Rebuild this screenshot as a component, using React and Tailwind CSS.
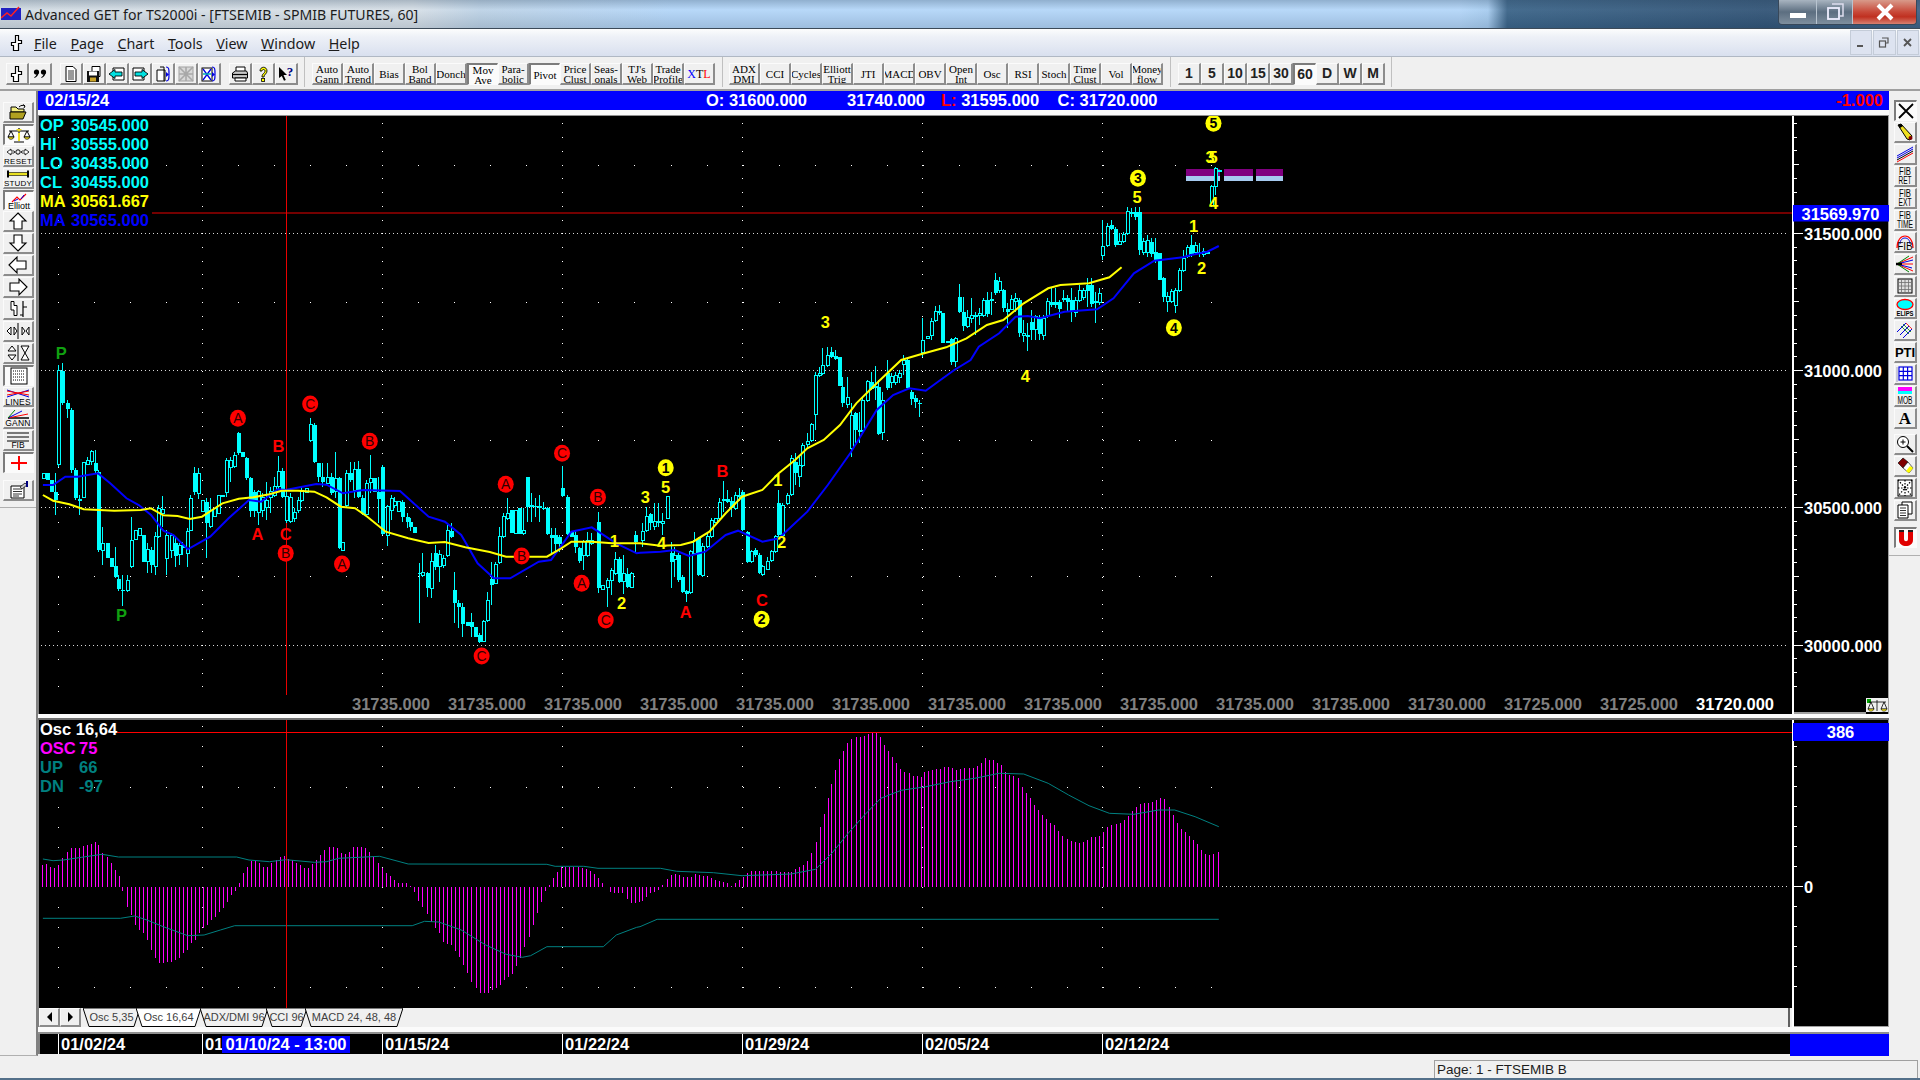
import React from "react";

const RAISED = "bg-[#f0f0f0] border-t border-l border-t-[#fbfbfb] border-l-[#fbfbfb] border-r-2 border-b-2 border-r-[#8c8c8c] border-b-[#8c8c8c]";
const PRESSED = "bg-[#fbfbfb] border-t-2 border-l-2 border-t-[#7c7c7c] border-l-[#7c7c7c] border-r border-b border-r-[#fbfbfb] border-b-[#fbfbfb]";

const Ico = ({ children, s = 18, vb = "0 0 18 18", w }) => (
  <svg width={w || s} height={s} viewBox={vb} className="block shrink-0">{children}</svg>
);
const T = ({ x = 11, y, children, size = 7.5, w = 700, fill = "#000", family = "Liberation Sans", len }) => (
  <text x={x} y={y} textAnchor="middle" fontSize={size} fontWeight={w} fill={fill} fontFamily={family} textLength={len} lengthAdjust={len ? "spacingAndGlyphs" : undefined}>{children}</text>
);

/* ---------- toolbar icons ---------- */
const HandIcon = () => <Ico><path d="M7.5 1.5h3v5h3v3h-3v7h-5v-5h-2v-3h4z" fill="#fff" stroke="#000" strokeWidth="1.2" /></Ico>;
const QuoteIcon = () => <Ico><circle cx="5.5" cy="7" r="2.6" /><path d="M7.6 7c0 3-1.5 5-4 6l-.4-.8c1.5-.8 2.4-2.2 2.4-4z" /><circle cx="12.5" cy="7" r="2.6" /><path d="M14.6 7c0 3-1.5 5-4 6l-.4-.8c1.5-.8 2.4-2.2 2.4-4z" /></Ico>;
const DocIcon = () => <Ico><path d="M4 1.5h7l3 3v12H4z" fill="#fff" stroke="#000" /><path d="M6 6h6M6 8h6M6 10h6M6 12h6M6 14h6" stroke="#000" strokeWidth=".8" /></Ico>;
const SaveIcon = () => <Ico><path d="M7 1.5h8v10H7z" fill="#fff" stroke="#000" /><path d="M2 6h12v11H2z" fill="#111" /><rect x="4" y="6.5" width="8" height="4" fill="#fff" /><rect x="5" y="12.5" width="6" height="4" fill="#c9a227" /></Ico>;
const ArrowDoc = ({ right }) => <Ico>{right ? <path d="M2 3h11v12H2z" fill="#fff" stroke="#000" /> : <path d="M5 3h11v12H5z" fill="#fff" stroke="#000" />}{right ? <path d="M4 7h7V4.500l6 4.500-6 4.500V11H4z" fill="#00e0e0" stroke="#000" strokeWidth=".9" /> : <path d="M14 7H7V4.500L1 9l6 4.500V11h7z" fill="#00e0e0" stroke="#000" strokeWidth=".9" />}</Ico>;
const SplitDoc = () => <Ico><path d="M3 5h8v11H3z" fill="#fff" stroke="#000" /><path d="M6 2h4v14" fill="none" stroke="#000" /><path d="M12 2c3 0 3 2 3 7s0 7-3 7" fill="none" stroke="#0000e0" strokeWidth="1.2" /><path d="M12 7l3 2.5-3 2.5" fill="#0000e0" /></Ico>;
const GrayX = () => <Ico><rect x="2" y="2" width="14" height="14" fill="#d8d8d8" stroke="#a0a0a0" /><path d="M2 2l14 14M16 2L2 16M9 2v14M2 9h14" stroke="#a8a8a8" strokeWidth="1.6" /></Ico>;
const BlueX = () => <Ico><rect x="2" y="3" width="10" height="13" fill="#fff" stroke="#000" /><path d="M3 4l8 11M11 4l-8 11" stroke="#0000e0" strokeWidth="1.3" /><path d="M3 9h8" stroke="#00b0b0" strokeWidth="1.5" /><path d="M12 2c3 0 3 2 3 7s0 7-3 7" fill="none" stroke="#0000e0" strokeWidth="1.2" /><path d="M12 7l3 2.5-3 2.5" fill="#0000e0" /></Ico>;
const PrintIcon = () => <Ico><path d="M5 2h9v5H5z" fill="#fff" stroke="#000" /><path d="M1.5 8l3-2h11l1 2v5h-15z" fill="#c8c8c8" stroke="#000" /><path d="M4 13h11v3H4z" fill="#fff" stroke="#000" /><path d="M2 9.5h14" stroke="#000" strokeWidth="1.2" /></Ico>;
const HelpIcon = () => <Ico><path d="M6 6c0-5 7-5 7 0 0 3-3 3-3 6H8c0-4 3-3.500 3-6 0-2-3-2-3 0z" fill="#ffff00" stroke="#000" strokeWidth=".9" /><rect x="7.600" y="13.500" width="3" height="3" fill="#ffff00" stroke="#000" strokeWidth=".8" /></Ico>;
const PointerHelp = () => <Ico><path d="M2 2l8 8H6.500l2.300 5-1.800.8L4.800 11 2 13z" fill="#000" /><text x="13" y="11" fontSize="13" fontWeight="700" fill="#000080" textAnchor="middle" fontFamily="Liberation Serif">?</text></Ico>;

/* ---------- left strip icons ---------- */
const W = 26;
const Lico = ({ children }) => <svg width={W} height={18} viewBox="0 0 26 18" className="block overflow-visible">{children}</svg>;
const OpenIco = () => <Lico><path d="M6 4h5l2 2h6v3H6z" fill="#f4f080" stroke="#000" /><path d="M5 9h16l-3 7H5z" fill="#b0a020" stroke="#000" /><path d="M14 4c2-2 4-2 6-1M20 3l-2-1.500M20 3l-1 2" fill="none" stroke="#000" /></Lico>;
const ScalesIco = () => <Lico><path d="M13 2v13M8 16h10M3 5h20" stroke="#000" strokeWidth="1.2" /><path d="M5 5l-3 6h6zM21 5l-3 6h6z" fill="none" stroke="#000" /><path d="M2 11c1 3 5 3 6 0zM18 11c1 3 5 3 6 0z" fill="#f0e020" stroke="#000" strokeWidth=".7" /><path d="M10 3l3 3 3-3z" fill="#e8d820" /><rect x="12" y="7" width="2" height="8" fill="#f0e020" /></Lico>;
const ResetIco = () => <Lico><path d="M2 5l4-3v2h3l1 1-1 1H6v2zM24 5l-4-3v2h-3l-1 1 1 1h3v2z" fill="#fff" stroke="#000" strokeWidth=".8" /><circle cx="13" cy="5" r="2.200" fill="none" stroke="#000" /><text x="13" y="16.500" textAnchor="middle" fontSize="8" fontWeight="400" fontFamily="Liberation Sans" letterSpacing=".3">RESET</text></Lico>;
const StudyIco = () => <Lico><rect x="3" y="3.500" width="20" height="3" fill="#e8e020" stroke="#000" strokeWidth=".6" /><path d="M3 1.500v7M23 1.500v7" stroke="#000" strokeWidth="2" /><text x="13" y="17" textAnchor="middle" fontSize="8" fontFamily="Liberation Sans" letterSpacing=".2">STUDY</text></Lico>;
const ElliottIco = () => <Lico><path d="M6 10l5-5 3 3 6-6" fill="none" stroke="#ff0000" strokeWidth="1.1" /><path d="M8 9l4-2" stroke="#0000e0" /><path d="M15 7l3-4" stroke="#0000e0" /><text x="13" y="17" textAnchor="middle" fontSize="9" fontFamily="Liberation Sans">Elliott</text></Lico>;
const ArrowIco = ({ d }) => <Lico><path d={d} fill="#fff" stroke="#000" strokeWidth="1.100" /></Lico>;
const BarsIco = () => <Lico><path d="M6 1.500h3v4H12v10H9V10H6z" fill="#fff" stroke="#000" /><path d="M18 1v6h4M18 7v10M18 15h-3" fill="none" stroke="#000" strokeWidth="1.200" /></Lico>;
const HSplit = () => <Lico><path d="M13 1v16" stroke="#000" /><path d="M6 5L2 9l4 4zM9 5v8l3-4zM17 5v8l3-4zM24 5l-3 4 3 4z" fill="#fff" stroke="#000" /></Lico>;
const VSplit = () => <Lico><path d="M13 1v16" stroke="#000" /><path d="M3 7l4-5 4 5zM3 11l4 5 4-5z" fill="#fff" stroke="#000" /><path d="M16 2h8l-4 7zM16 16h8l-4-7z" fill="#fff" stroke="#000" /></Lico>;
const DotGrid = () => <Lico><rect x="5" y="1" width="16" height="16" fill="#fff" stroke="#000" /><path d="M7 4h12M7 7h12M7 10h12M7 13h12" stroke="#000" strokeWidth="1" strokeDasharray="1 1" /></Lico>;
const LinesIco = () => <Lico><path d="M2 2l22 7M2 9l22-7" stroke="#0000e0" /><path d="M2 3l22 4" stroke="#ff0000" /><path d="M2 7l22-4" stroke="#ff0000" /><text x="13" y="17" textAnchor="middle" fontSize="8.500" fontFamily="Liberation Sans" letterSpacing=".2">LINES</text></Lico>;
const GannIco = () => <Lico><path d="M3 9h21" stroke="#000" strokeWidth="1.500" /><path d="M3 9l20-4" stroke="#ff0000" /><path d="M3 9l14-7" stroke="#0000e0" /><path d="M3 9l7-8" stroke="#008000" /><text x="13" y="17" textAnchor="middle" fontSize="8.500" fontFamily="Liberation Sans" letterSpacing=".2">GANN</text></Lico>;
const FibLeft = () => <Lico><path d="M2 2h22M2 6h22M2 10h22" stroke="#000" strokeWidth="1.200" /><text x="13" y="17" textAnchor="middle" fontSize="8.500" fontFamily="Liberation Sans">FIB</text></Lico>;
const Cross = () => <Lico><path d="M13 2v14M5 9h16" stroke="#ff0000" strokeWidth="2" /></Lico>;
const NotesIco = () => <Lico><path d="M6 5h13v12H6z" fill="#fff" stroke="#000" /><path d="M8 8h9M8 10.500h9M8 13h9M8 15h6" stroke="#000" strokeWidth=".8" /><path d="M15 6l5-4 2 2-5 4z" fill="#c8c8c8" stroke="#000" strokeWidth=".7" /><rect x="21" y="0" width="2" height="6" fill="#000080" /></Lico>;

const up = "M13 1l8 8h-4v8H9V9H5z";
const dn = "M13 17l8-8h-4V1H9v8H5z";
const lf = "M4 9l8-8v4h9v8h-9v4z";
const rt = "M22 9l-8-8v4H5v8h9v4z";

const LEFT_TOOLS = [
  { i: <OpenIco /> },
  { i: <ScalesIco />, p: 1 },
  { i: <ResetIco /> },
  { i: <StudyIco /> },
  { i: <ElliottIco />, p: 1 },
  { i: <ArrowIco d={up} /> },
  { i: <ArrowIco d={dn} /> },
  { i: <ArrowIco d={lf} /> },
  { i: <ArrowIco d={rt} /> },
  { i: <BarsIco /> },
  { i: <HSplit /> },
  { i: <VSplit /> },
  { i: <DotGrid />, p: 1 },
  { i: <LinesIco /> },
  { i: <GannIco /> },
  { i: <FibLeft /> },
  { i: <Cross />, p: 1 },
];

/* ---------- right strip icons ---------- */
const Rico = ({ children }) => <svg width={20} height={18} viewBox="0 0 20 18" className="block overflow-visible">{children}</svg>;
const Two = ({ a, b, la, lb }) => <Rico><T x={10} y={8} size={10} w={400} len={la}>{a}</T><T x={10} y={16.500} size={10} w={400} len={lb}>{b}</T></Rico>;
const RIGHT_1 = [
  { i: <Rico><path d="M3 2l14 14M17 2L3 16" stroke="#000" strokeWidth="1.800" /></Rico>, p: 1 },
  { i: <Rico><path d="M3 2l3-1 11 12-2 4-3-1z" fill="#f0e020" stroke="#000" /><path d="M3 2l3-1 2 2-3 2z" fill="#000" /><circle cx="15.500" cy="15" r="2" fill="#800000" /></Rico> },
  { i: <Rico><path d="M2 11L18 2M2 13L18 4" stroke="#0000e0" /><path d="M2 15L18 6" stroke="#000" /><path d="M2 17L18 8" stroke="#ff0000" /></Rico> },
  { i: <Two a="FIB" b="RET" la={12} lb={13} /> },
  { i: <Two a="FIB" b="EXT" la={12} lb={13} /> },
  { i: <Two a="FIB" b="TIME" la={12} lb={16} /> },
  { i: <Rico><path d="M2 15c0-16 16-16 16 0" fill="none" stroke="#ff0000" strokeWidth="1.200" /><path d="M5 11c0-8 10-8 10 0" fill="none" stroke="#0000e0" /><text x="10" y="17" fontSize="10" textAnchor="middle" fontFamily="Liberation Sans">FIB</text></Rico> },
  { i: <Rico><path d="M2 9l16-7M2 9l16 0M2 9l16 7" stroke="#ff0000" /><path d="M2 9l16-4M2 9l15 4" stroke="#0000e0" /><path d="M2 9l12-8M2 9l12 8" stroke="#008000" /><path d="M1 9h6" stroke="#000" strokeWidth="2.500" /></Rico> },
  { i: <Rico><rect x="3" y="2" width="14" height="14" fill="#e0e0e0" stroke="#000" /><path d="M6.500 2v14M10 2v14M13.500 2v14M3 5.500h14M3 9h14M3 12.500h14" stroke="#707070" strokeWidth=".8" /></Rico> },
  { i: <Rico><ellipse cx="10" cy="5.500" rx="8" ry="5" fill="#00ffff" stroke="#ff0000" strokeWidth="1.300" /><text x="10" y="17" fontSize="8" fontWeight="700" textAnchor="middle" fontFamily="Liberation Sans" textLength="17" lengthAdjust="spacingAndGlyphs">ELIPS</text></Rico> },
  { i: <Rico><path d="M2 11l9-9M5 14l9-9M8 17l9-9" stroke="#0000e0" /><path d="M8 3l8 8M6 5l8 8" stroke="#008000" strokeWidth=".8" /><path d="M11 2l6 6" stroke="#ff0000" strokeWidth=".8" /></Rico> },
  { i: <Rico><T x={10} y={14} size={13} w={700}>PTI</T></Rico> },
  { i: <Rico><path d="M2 2v15" stroke="#a0a0c0" /><rect x="4" y="2" width="13" height="13" fill="#fff" stroke="#0000e0" strokeWidth="1.200" /><path d="M8.300 2v13M12.600 2v13M4 6.300h13M4 10.600h13" stroke="#0000e0" strokeWidth="1.200" /></Rico> },
  { i: <Rico><rect x="3" y="0" width="14" height="4" fill="#ff00ff" /><rect x="3" y="4" width="14" height="3" fill="#00ffff" /><text x="10" y="17" fontSize="10" textAnchor="middle" fontFamily="Liberation Sans" textLength="15" lengthAdjust="spacingAndGlyphs">MOB</text></Rico> },
  { i: <Rico><text x="10" y="15" fontSize="17" fontWeight="700" textAnchor="middle" fontFamily="Liberation Serif">A</text></Rico> },
];
const RIGHT_2 = [
  { i: <Rico><circle cx="8" cy="7" r="5.500" fill="#fff" stroke="#000" /><path d="M5.500 7h5M8 4.500v5" stroke="#000" /><path d="M12 11l6 6" stroke="#000" strokeWidth="2" /></Rico> },
  { i: <Rico><path d="M3 6l5-5 5 4-5 6z" fill="#800000" stroke="#000" strokeWidth=".6" /><path d="M8 11l5-6 5 6-4 5z" fill="#fff" stroke="#000" strokeWidth=".6" /><path d="M11 14l4-5 3 2-4 5z" fill="#ffff00" /></Rico> },
  { i: <Rico><rect x="3" y="1" width="14" height="16" fill="#fff" stroke="#000" /><path d="M3 1l14 16M17 1L3 17M10 1v16M3 9h14" stroke="#000" strokeWidth="1.200" strokeDasharray="1.500 1.500" /></Rico> },
  { i: <Rico><path d="M7 1h10v12H7z" fill="#fff" stroke="#000" /><path d="M3 4h10v13H3z" fill="#fff" stroke="#000" /><path d="M5 7h6M5 9.500h6M5 12h6M5 14.500h6" stroke="#000" strokeWidth=".8" /></Rico> },
];

/* ---------- top toolbar data ---------- */
const Sv = ({ children, c = "" }) => <span className={"whitespace-pre-line text-center leading-[10px] text-[11px] text-black [font-family:Liberation_Serif,serif] " + c}>{children}</span>;
const IND_1 = ["Auto\nGann", "Auto\nTrend", "Bias", "Bol\nBand", "Donch", "Mov\nAve", "Para-\nbolic", "Pivot", "Price\nClust", "Seas-\nonals", "TJ's\nWeb", "Trade\nProfile"];
const IND_2 = ["ADX\nDMI", "CCI", "Cycles", "Elliott\nTrig", "JTI", "MACD", "OBV", "Open\nInt", "Osc", "RSI", "Stoch", "Time\nClust", "Vol", "Money\nflow"];
const PERIODS = ["1", "5", "10", "15", "30", "60", "D", "W", "M"];

const Tb = ({ p, children, wide }) => (
  <div className={"flex items-center justify-center overflow-hidden h-[22px] " + (wide ? "w-[31px] " : "w-[23px] ") + (p ? PRESSED : RAISED)}>{children}</div>
);

/* ---------- chart data: [x, bodyTop, bodyBottom, filled, wickTop, wickBottom] ---------- */
const C4 = [[105,640,655,0],[114,640,660,1],[124,660,695,1],[134,695,720,1,640,765],[143,332,612,0,315,620],[153,332,430,1,310,435],[163,428,447,1,420,475],[173,450,630,1,445,640],[183,630,715,1,625,720],[193,718,722,1,705,765],[203,607,712,0],[213,600,612,0,590,615],[222,575,605,0,570,615],[232,610,632,1,570,640],[241,635,870,1,630,875],[251,850,872,0,800,915],[261,850,895,1],[271,895,922,1],[281,917,952,1,860,955],[290,958,988,1,945,992],[300,990,994,1,945,1038],[310,962,992,0,945,995],[320,840,920,0,770,925],[330,812,838,0],[340,806,825,0],[350,825,905,1],[360,868,905,0,850,940],[370,870,915,1,860,940],[380,830,920,0,815,945],[388,745,830,0,735,835],[398,747,760,0,708,800],[407,826,895,0,810,945],[418,826,870,0,820,895],[428,850,887,1,830,920],[438,855,882,0,850,915],[447,858,862,0,845,885],[457,815,880,0,805,922],[466,715,810,0,705,812],[476,640,697,1,622,705],[486,640,700,0,625,718],[495,722,755,0],[505,726,790,1,715,893],[515,752,800,0,715,805],[525,746,770,0],[535,705,760,0],[545,705,708,0],[553,600,697,0,595,710],[563,602,622,0,590,665],[573,585,620,0,575,625],[583,520,578,1,515,585],[593,575,590,1],[603,595,655,1,590,660],[613,655,752,1,650,770],[623,695,752,1,690,770],[632,695,757,0,690,795],[642,712,752,0,700,770],[652,720,742,0,665,780],[662,695,712,0,680,760],[672,680,705,0,650,710],[682,635,680,0,588,690],[692,632,710,1,625,715],[700,710,782,0,690,790],[710,712,785,0,700,790],[720,757,775,0,745,785],[730,720,752,0,710,760],[738,692,720,0,682,725],[750,685,697,0],[760,493,542,0,475,545],[770,495,607,1,490,610],[780,610,650,1,608,665],[790,650,667,1,610,680],[800,652,670,0,610,672],[810,652,700,1,640,705],[820,655,695,0,575,715],[830,655,865,1,650,868],[838,848,870,0],[848,640,735,0,630,745],[858,640,660,1,605,665],[868,628,690,0,605,715],[878,628,710,1,602,715],[887,715,762,1,705,765],[897,670,762,0,660,765],[907,655,667,0,585,700],[917,655,697,1],[927,695,717,1,650,790],[937,620,822,1,615,826],[947,740,825,0,735,857],[957,715,752,0,705,780],[966,725,737,0,710,745],[976,725,755,0],[986,725,770,1,720,785],[996,770,785,1,760,805],[1005,785,802,1,775,812],[1015,800,818,1],[1027,938,942,1,910,1090],[1035,938,946,0,880,950],[1045,940,985,1,935,1010],[1055,905,985,0,880,1015],[1065,880,920,1,855,930],[1075,882,920,0,870,965],[1085,895,917,0,885,925],[1095,812,885,0,795,892],[1105,812,832,1,790,835],[1113,990,1028,1,935,1090],[1123,1028,1042,1,1020,1105],[1133,1042,1092,1,1030,1130],[1143,1085,1097,1],[1155,1085,1102,1,1060,1130],[1163,1102,1130,1],[1173,1125,1147,1,1120,1150],[1183,1085,1143,0,1080,1146],[1192,1020,1082,0,995,1085],[1202,958,975,1,905,1035],[1212,912,970,0,905,972],[1222,830,907,0,800,912],[1232,770,830,0,760,835],[1241,760,775,0,715,780],[1251,750,820,1],[1261,750,820,0],[1271,745,822,1],[1281,810,820,0,745,825],[1290,652,740,1,650,785],[1300,735,742,1,700,785],[1310,738,742,1,715,770],[1320,738,745,1,705,785],[1330,745,748,1,725,750],[1339,745,822,1,740,825],[1349,825,835,1,805,880],[1359,825,852,1,805,880],[1369,830,852,1,825,875],[1378,683,708,1,618,712],[1388,710,822,1,705,825],[1398,815,832,1],[1408,825,862,1,810,880],[1418,865,902,1,860,910],[1428,845,887,0,840,930],[1438,840,887,0,815,890],[1447,842,850,0,818,855],[1466,785,985,1,755,1000],[1476,975,987,0],[1486,960,982,0,955,1040],[1496,930,962,0,925,1005],[1506,897,940,0,875,945],[1516,897,965,1,890,970],[1526,940,965,0,885,1002],[1536,942,982,1,925,985],[1546,940,982,0,935,985],[1556,825,847,1,812,880]];
const C5 = [[5,815,842,0,790,862],[15,770,812,0,740,815],[25,763,790,1,760,810],[35,785,800,0,730,810],[45,785,788,0,730,800],[55,785,790,0,760,825],[65,710,775,0],[75,880,905,1,845,985],[83,885,897,0,860,950],[93,885,960,1,880,965],[103,950,997,1,945,1000],[113,993,1002,1,990,1025],[123,875,997,0,870,1002],[133,840,880,0,815,885],[143,835,945,1,830,948],[153,860,945,0,850,950],[163,830,860,0,815,865],[173,780,830,0,775,835],[183,775,787,0],[193,728,775,0,715,780],[203,717,720,0,662,755],[213,717,727,1,690,730],[223,722,745,1,710,770],[233,705,745,0,695,750],[243,705,708,0,685,722],[251,695,810,1,690,812],[261,815,905,1,812,908],[271,875,905,0,870,908],[281,870,885,1,865,890],[291,885,938,1,880,942],[300,920,942,0,915,948],[310,905,927,0,890,930],[320,875,902,0,870,905],[330,830,875,0,825,880],[339,730,825,1,690,835],[349,735,825,0,730,828],[359,705,730,0,700,735],[369,595,702,0,585,708],[379,605,640,1,580,675],[389,615,650,0,590,680],[398,555,617,0,550,620],[408,545,552,0,520,565],[418,492,540,0,490,545],[428,345,463,0,335,510],[438,340,347,0,320,350],[447,315,340,0,265,345],[457,285,317,0,262,320],[467,275,292,1,262,295],[477,287,297,1,270,300],[487,290,378,1],[496,380,430,1,350,440],[506,412,432,0,350,445],[516,465,565,0,430,590],[526,460,510,1,455,550],[536,510,513,0,455,550],[545,420,512,0,415,515],[555,365,420,0,360,425],[565,367,387,1,335,390],[575,380,383,0,318,420],[584,380,522,1,360,525],[594,420,517,0,395,540],[604,340,385,1,300,390],[614,350,367,0,340,385],[624,345,367,0,335,375],[634,340,352,0,330,370],[644,300,312,0,285,345],[653,300,385,1,295,390],[663,395,417,1,390,435],[673,415,427,1,405,445],[683,428,431,1,420,470],[692,242,278,0,175,290],[702,230,236,0],[712,185,227,0,175,240],[722,155,182,0,138,185],[732,155,158,0,135,165],[741,158,250,1],[751,245,248,0],[761,238,305,1,235,315],[771,235,305,0,230,320],[781,112,155,1,72,160],[791,155,198,1,110,212],[800,172,200,0,150,205],[810,165,175,0,115,190],[820,165,168,0,155,225],[830,160,165,0,145,195],[840,120,165,0,115,170],[850,120,162,1,95,170],[860,118,122,0,95,165],[869,60,100,1,40,105],[879,65,92,0,50,100],[889,90,145,1,88,155],[899,147,155,1,130,205],[909,118,147,0,105,150],[919,115,125,0,100,155],[928,120,220,1,115,230],[938,220,225,0,180,245],[948,225,228,0,190,272],[958,185,210,1,150,240],[968,170,207,0,165,240],[977,170,222,1,165,240],[987,175,225,0,165,240],[997,125,167,0,115,175],[1007,125,135,1,80,140],[1017,125,135,1,85,145],[1027,125,147,1,120,175],[1037,115,118,0,90,125],[1047,115,125,1,105,155],[1056,120,157,1,85,185],[1066,120,157,0,110,170],[1076,90,122,0,75,125],[1086,90,112,0,85,120],[1096,75,92,1,55,140],[1105,75,132,1,55,140],[1115,125,128,0,95,188],[1125,100,127,0,85,135],[1272,-20,60,1],[1281,55,110,1,50,125],[1291,110,125,0,95,155],[1300,95,125,0,88,130],[1310,90,135,0,85,160],[1320,30,92,0,25,95],[1330,-5,30,0,-30,35]];
const C2 = [[1133,740,767,0,660,780],[1143,680,737,0,670,740],[1153,675,687,1,660,690],[1163,688,735,1,680,740],[1173,725,732,0,700,735],[1183,703,725,0,695,730],[1193,635,700,0,622,705],[1203,635,642,1,625,650],[1213,637,652,1,622,660],[1222,635,750,1,620,765],[1232,725,757,0,715,765],[1242,720,757,0,705,770],[1252,725,762,1,715,770],[1262,755,780,1,715,790],[1340,742,770,0,735,775],[1349,735,762,1,705,770],[1359,735,757,0,725,765],[1369,755,762,1,730,770],[1379,755,762,0,745,770],[1389,757,762,1],[1398,560,617,0,555,622],[1408,505,560,0,500,585],[1418,510,516,1]];

const z4 = ([x, y]) => [x / 2.45, 260 + y / 3];
const z5 = ([x, y]) => [640 + x / 2.45, 260 + y / 3];
const z2 = ([x, y]) => [640 + x / 2.45, y / 3];
const mapC = (arr, bx, by) => arr.map(([x, t, b, f, wt, wb]) => ({ x: Math.round(bx + x / 2.45), t: by + t / 3, b: by + b / 3, f, wt: by + (wt ?? t) / 3, wb: by + (wb ?? b) / 3 }));
const CANDLES = [...mapC(C4, 0, 260), ...mapC(C5, 640, 260), ...mapC(C2, 640, 0)];

const pts = (a) => a.map(([x, y]) => x.toFixed(1) + "," + y.toFixed(1)).join(" ");
const pairs = (f, list) => list.map(f);
const YELLOW = pts([...pairs(z4, [[105,705],[130,722],[170,733],[205,748],[280,752],[345,750],[370,745],[400,766],[435,768],[465,777],[495,770],[520,750],[545,730],[585,716],[620,712],[660,703],[690,692],[730,692],[770,695],[800,712],[835,740],[870,745],[900,770],[945,815],[1000,835],[1050,849],[1090,846],[1140,862],[1200,876],[1240,890],[1340,890],[1375,865],[1400,845],[1450,845],[1500,850],[1568,850]]), ...pairs(z5, [[50,857],[100,855],[130,845],[170,815],[210,760],[250,710],[300,690],[340,640],[380,600],[410,565],[450,540],[490,495],[530,430],[580,370],[640,300],[690,282],[750,262],[800,235],[850,195],[890,180],[940,130],[1000,85],[1030,75],[1100,70],[1150,52],[1180,22]])]);
const BLUE = pts([...pairs(z4, [[105,675],[130,675],[160,650],[190,650],[240,640],[270,670],[310,715],[340,735],[370,765],[400,812],[425,825],[460,868],[515,830],[560,775],[610,720],[640,725],[680,688],[700,690],[750,678],[775,672],[800,674],[840,700],[890,690],[980,693],[1050,770],[1090,785],[1130,825],[1170,910],[1210,955],[1250,955],[1320,905],[1350,900],[1400,815],[1450,802],[1510,850],[1560,880]]), ...pairs(z5, [[0,878],[50,875],[85,870],[120,888],[160,875],[210,825],[240,812],[300,845],[340,835],[410,755],[460,675],[515,580],[580,450],[620,405],[660,385],[700,392],[730,365],[770,330],[810,300],[830,260],[880,220],[920,170],[950,168],[980,175],[1040,155],[1120,148],[1160,115],[1210,40],[1260,2]]), ...pairs(z2, [[1330,772],[1350,765],[1390,755],[1418,738]])]);

const LABELS = [
  [z4([150,280]),"P","#10a010"],[z4([298,1065]),"P","#10a010"],
  [z4([583,475]),"A","r",1],[z4([682,557]),"B","#ff0000"],[z4([631,823]),"A","#ff0000"],[z4([700,822]),"C","#ff0000"],[z4([700,880]),"B","r",1],[z4([760,432]),"C","r",1],[z4([906,544]),"B","r",1],[z4([838,912]),"A","r",1],[z4([1377,580]),"C","r",1],[z4([1239,673]),"A","r",1],[z4([1465,712]),"B","r",1],[z4([1278,888]),"B","r",1],[z4([1425,970]),"A","r",1],[z4([1484,1080]),"C","r",1],[z4([1180,1188]),"C","r",1],
  [z4([1505,843]),"1","#ffff00"],[z4([1523,1030]),"2","#ffff00"],
  [z5([63,623]),"1","y",1],[z5([63,680]),"5","#ffff00"],[z5([13,712]),"3","#ffff00"],[z5([53,850]),"4","#ffff00"],[z5([202,633]),"B","#ff0000"],[z5([338,660]),"1","#ffff00"],[z5([347,845]),"2","#ffff00"],[z5([112,1055]),"A","#ff0000"],[z5([299,1020]),"C","#ff0000"],[z5([298,1078]),"2","y",1],[z5([454,187]),"3","#ffff00"],[z5([944,347]),"4","#ffff00"],[z5([1308,203]),"4","y",1],[z5([1376,25]),"2","#ffff00"],
  [z2([1220,535]),"3","y",1],[z2([1218,592]),"5","#ffff00"],[z2([1356,677]),"1","#ffff00"],[z2([1405,370]),"5","y",1],[z2([1397,470]),"3","#ffff00"],[z2([1404,470]),"5","#ffff00"],[z2([1405,608]),"4","#ffff00"],
];

/* grid */
const TICK = 13.73;
const mainYs = []; for (let k = -8; k <= 34; k++) { const y = 233.3 + k * TICK; if (y > 118 && y < 700) mainYs.push({ y, k }); }
const VX = [202, 382, 562, 742, 922, 1102];
const HX = []; for (let x = 58; x <= 1211; x += 36.03) HX.push(Math.round(x));
const mainDots = [];
mainYs.forEach(({ y, k }) => { VX.forEach((x) => mainDots.push([x, y])); if (k % 2 === 1 || k % 2 === -1) mainDots.push([58, y]); });
[165, 302, 439.5, 576].forEach((y) => HX.forEach((x) => mainDots.push([x, y])));

const OSC0 = 886.7;
const oscYs = []; for (let k = -8; k <= 5; k++) oscYs.push(OSC0 + k * 20.05);
const oscDots = [];
oscYs.forEach((y) => { VX.forEach((x) => oscDots.push([x, y])); if (y > 790 && Math.abs(y - OSC0) > 5) oscDots.push([58, y]); });
[787, 987].forEach((y) => HX.forEach((x) => oscDots.push([x, y])));

/* oscillator bars: flat list of x,tip in zoom units */
const O6 = [103,465,113,462,123,470,133,475,143,465,153,445,163,425,173,415,183,415,193,413,203,408,213,405,222,403,232,396,241,405,251,430,261,440,271,460,281,480,291,498,300,543,310,590,320,615,330,645,340,660,350,670,360,690,370,720,380,745,389,758,399,758,409,756,419,755,428,750,438,745,448,730,458,720,467,700,477,690,487,670,497,655,507,645,517,630,526,620,536,605,546,595,556,575,566,555,575,542,585,518,595,490,605,470,615,453,625,453,635,458,645,470,655,472,665,460,675,450,685,440,695,438,705,447,715,450,725,458,735,465,745,475,755,475,765,462,775,450,785,435,795,420,805,412,815,410,825,415,835,430,845,432,855,425,865,412,875,410,885,412,895,415,905,425,915,440,925,458,935,475,945,488,955,498,965,510,975,520,985,520,995,520,1005,528,1015,545,1025,573,1035,590,1045,612,1055,635,1065,655,1075,670,1085,695,1095,703,1105,705,1115,722,1125,742,1135,765,1145,790,1155,815,1165,835,1175,850,1185,850,1195,848,1205,840,1215,835,1225,825,1235,810,1245,800,1255,792,1265,768,1275,745,1285,710,1295,680,1305,645,1315,610,1325,575,1335,542,1345,525,1355,505,1365,485,1375,472,1385,470,1395,470,1405,470,1415,472,1425,475,1435,478,1445,482,1455,492,1465,505,1475,520,1485,530,1495,545,1505,548,1515,550,1525,548,1535,568,1545,580,1555,578,1565,575];
const O7 = [5,572,15,560,25,550,35,545,45,540,55,525,65,508,75,495,85,492,95,495,105,502,115,502,125,502,135,492,145,495,155,498,165,498,173,505,183,510,193,514,203,516,213,520,222,528,232,520,242,510,252,500,262,490,272,483,282,482,292,484,302,484,312,482,322,484,332,484,342,487,352,487,362,487,370,485,380,478,390,470,400,465,410,452,420,430,430,395,440,352,450,312,460,265,468,222,478,180,488,148,498,122,508,98,518,88,528,82,538,80,548,78,558,72,568,68,578,68,588,82,598,105,608,122,618,140,628,158,638,178,648,185,658,190,668,198,678,198,688,202,695,185,705,182,715,180,725,178,735,178,745,172,755,170,765,175,775,180,785,178,795,175,805,175,815,175,825,168,835,158,845,145,855,150,865,150,875,158,885,165,895,185,905,195,915,197,925,205,935,232,945,250,955,265,965,285,975,300,985,315,995,328,1005,340,1015,345,1025,362,1035,378,1045,388,1055,392,1065,395,1075,398,1085,396,1095,390,1105,380,1115,380,1125,378,1135,365,1145,350,1155,345,1165,342,1175,340,1185,330,1195,318,1205,303,1215,290,1225,282,1235,280,1245,278,1255,275,1265,270,1275,265,1285,268,1295,290,1305,315,1315,340,1325,357,1335,365,1345,378,1355,390,1365,402,1375,420,1385,432,1395,435,1405,432,1415,425,1418,410];
const BARS = [];
for (let i = 0; i < O6.length; i += 2) BARS.push([Math.round(O6[i] / 2.45), 710 + O6[i + 1] / 3]);
for (let i = 0; i < O7.length - 2; i += 2) BARS.push([Math.round(640 + O7[i] / 2.45), 710 + O7[i + 1] / 3]);
const zo6 = ([x, y]) => [x / 2.45, 710 + y / 3];
const zo7 = ([x, y]) => [640 + x / 2.45, 710 + y / 3];
const TEAL_U = pts([...[[105,447],[130,452],[155,450],[200,442],[250,433],[290,441],[580,441],[610,450],[660,455],[700,449],[770,457],[800,455],[830,445],[930,439],[1000,462],[1340,463],[1360,469],[1430,469],[1465,475],[1568,475]].map(zo6), ...[[50,475],[90,484],[180,488],[250,497],[370,492],[430,478],[470,430],[510,370],[550,315],[590,265],[640,241],[700,230],[760,215],[820,205],[880,190],[940,192],[1000,220],[1050,255],[1100,287],[1150,310],[1210,313],[1270,300],[1310,300],[1360,320],[1418,350]].map(zo7)]);
const TEAL_L = pts([...[[105,625],[295,625],[330,618],[360,630],[400,650],[460,677],[500,675],[540,660],[575,647],[1010,647],[1040,634],[1075,636],[1130,660],[1190,705],[1240,733],[1280,742],[1300,737],[1340,710],[1478,710],[1510,675],[1560,652]].map(zo6), ...[[0,650],[42,628],[1418,628]].map(zo7)]);

const Dots = ({ list }) => <g fill="#fff" shapeRendering="crispEdges">{list.map(([x, y], i) => <rect key={i} x={x} y={Math.round(y)} width="1" height="1" />)}</g>;

const MainChart = () => (
  <svg width="1753" height="598" viewBox="39 116 1753 598" className="block">
    <Dots list={mainDots} />
    <g stroke="#d8d8d8" strokeDasharray="1 3" shapeRendering="crispEdges">
      {[233, 370, 507, 645].map((y) => <line key={y} x1="41" x2="1788" y1={y} y2={y} />)}
    </g>
    <line x1="286.500" x2="286.500" y1="116" y2="695" stroke="#e80000" />
    <line x1="152" x2="1792" y1="213" y2="213" stroke="#e80000" />
    <g shapeRendering="crispEdges">
      {[[1186, 34], [1224, 29], [1256, 27]].map(([x, w]) => (
        <g key={x}><rect x={x} y="169" width={w} height="7" fill="#800080" /><rect x={x} y="176" width={w} height="5" fill="#a6caf0" /></g>
      ))}
    </g>
    <g shapeRendering="crispEdges">
      {CANDLES.map((c, i) => (
        <g key={i}>
          <line x1={c.x + 0.5} x2={c.x + 0.5} y1={c.wt} y2={c.wb} stroke="#00ffff" />
          {c.f ? <rect x={c.x - 1.5} y={c.t} width="4" height={Math.max(c.b - c.t, 1)} fill="#00ffff" /> : <rect x={c.x - 1} y={c.t} width="3" height={Math.max(c.b - c.t, 1)} fill="#000" stroke="#00ffff" />}
        </g>
      ))}
    </g>
    <polyline points={BLUE} fill="none" stroke="#0000ff" strokeWidth="2" />
    <polyline points={YELLOW} fill="none" stroke="#ffff00" strokeWidth="2" />
    <g fontFamily="Liberation Sans" fontWeight="700" textAnchor="middle" dominantBaseline="central">
      {LABELS.map(([[x, y], t, col, circ], i) => circ ? (
        <g key={i}>
          <ellipse cx={x} cy={y} rx="8" ry="8.500" fill={col === "r" ? "#ff0000" : "#ffff00"} />
          <text x={x} y={y} fontSize="14" fill={col === "r" ? "#300000" : "#000"} fontWeight={col === "r" ? 400 : 700}>{t}</text>
        </g>
      ) : <text key={i} x={x} y={y} fontSize="16.500" fill={col}>{t}</text>)}
    </g>
  </svg>
);

const OscChart = () => (
  <svg width="1753" height="288" viewBox="39 720 1753 288" className="block">
    <Dots list={oscDots} />
    <line x1="1222" x2="1788" y1="886.500" y2="886.500" stroke="#d8d8d8" strokeDasharray="1 3" shapeRendering="crispEdges" />
    <g stroke="#ff00ff" strokeWidth="1" shapeRendering="crispEdges">
      {BARS.map(([x, y], i) => <line key={i} x1={x + 0.5} x2={x + 0.5} y1={y} y2={OSC0} />)}
    </g>
    <polyline points={TEAL_U} fill="none" stroke="#008080" strokeWidth="1" />
    <polyline points={TEAL_L} fill="none" stroke="#008080" strokeWidth="1" />
    <line x1="286.500" x2="286.500" y1="720" y2="1008" stroke="#e80000" />
    <line x1="116" x2="1792" y1="732.500" y2="732.500" stroke="#ff0000" />
  </svg>
);

const PriceAxis = () => (
  <svg width="97" height="598" viewBox="1792 116 97 598" className="block">
    <rect x="1792" y="116" width="2" height="598" fill="#fff" />
    <rect x="1888" y="116" width="1" height="598" fill="#a0a0a0" />
    <rect x="1794" y="712" width="72" height="2" fill="#a0a0a0" />
    <g stroke="#fff" shapeRendering="crispEdges">
      {mainYs.map(({ y, k }) => {
        const mk = ((k % 10) + 10) % 10;
        return <line key={k} x1="1794" x2={mk === 0 ? 1803 : mk === 5 ? 1799 : 1797} y1={y} y2={y} />;
      })}
    </g>
    <g fill="#fff" fontFamily="Liberation Sans" fontWeight="700" fontSize="16.500" dominantBaseline="central">
      {[[31500, 234], [31000, 371], [30500, 508], [30000, 646]].map(([v, y]) => <text key={v} x="1804" y={y}>{v}.000</text>)}
    </g>
    <rect x="1793" y="205" width="96" height="16.500" fill="#0000ff" />
    <text x="1840.500" y="213.500" fill="#fff" fontFamily="Liberation Sans" fontWeight="700" fontSize="16.500" textAnchor="middle" dominantBaseline="central">31569.970</text>
    <g transform="translate(1866 698)">
      <rect width="22" height="14" fill="#f0f0f0" />
      <rect x="1" y="1" width="4" height="4" fill="#00a000" />
      <path d="M3 4h17M11 2v11M5 4l-3 7h6zM18 4l-3 7h6z" stroke="#000" strokeWidth=".8" fill="none" />
      <path d="M2 11c1 3 5 3 6 0zM15 11c1 3 5 3 6 0z" fill="#f0e020" stroke="#000" strokeWidth=".5" />
    </g>
  </svg>
);

const OscAxis = () => (
  <svg width="97" height="307" viewBox="1792 720 97 307" className="block">
    <rect x="1792" y="720" width="2" height="307" fill="#fff" />
    <rect x="1888" y="720" width="1" height="307" fill="#a0a0a0" />
    <rect x="1794" y="1026" width="94" height="1" fill="#a0a0a0" />
    <g stroke="#fff" shapeRendering="crispEdges">
      {oscYs.map((y, i) => <line key={i} x1="1794" x2={Math.abs(y - OSC0) < 1 ? 1803 : 1797} y1={y} y2={y} />)}
    </g>
    <text x="1804" y="887" fill="#fff" fontFamily="Liberation Sans" fontWeight="700" fontSize="16.500" dominantBaseline="central">0</text>
    <rect x="1793" y="723" width="96" height="18" fill="#0000ff" />
    <text x="1840.500" y="732" fill="#fff" fontFamily="Liberation Sans" fontWeight="700" fontSize="16.500" textAnchor="middle" dominantBaseline="central">386</text>
  </svg>
);

const Tab = ({ w, active, children, c }) => (
  <div className={"relative h-[19px] flex items-center justify-center " + c + (active ? " z-10" : "")}>
    <svg width={w} height="19" viewBox={`0 0 ${w} 19`} className="absolute left-0 top-0">
      <polygon points={`0,0 ${w},0 ${w - 6},18.500 6,18.500`} fill={active ? "#fff" : "#f0f0f0"} stroke="#000" strokeWidth="1" />
    </svg>
    <span className="relative text-[11px] text-[#404040] whitespace-nowrap">{children}</span>
  </div>
);

const INFO = [
  ["OP", "30545.000", "text-[#00ffff]"],
  ["HI", "30555.000", "text-[#00ffff]"],
  ["LO", "30435.000", "text-[#00ffff]"],
  ["CL", "30455.000", "text-[#00ffff]"],
  ["MA", "30561.667", "text-[#ffff00]"],
  ["MA", "30565.000", "text-[#0000ff]"],
];
const OSCINFO = [
  ["OSC", "75", "text-[#ff00ff]"],
  ["UP", "66", "text-[#008080]"],
  ["DN", "-97", "text-[#008080]"],
];
const BOTTOM_PRICES = ["31735.000", "31735.000", "31735.000", "31735.000", "31735.000", "31735.000", "31735.000", "31735.000", "31735.000", "31735.000", "31735.000", "31730.000", "31725.000", "31725.000", "31720.000"];
const DATES = [["w-[144px]", "01/02/24"], ["w-[180px]", "01"], ["w-[180px]", "01/15/24"], ["w-[180px]", "01/22/24"], ["w-[180px]", "01/29/24"], ["w-[180px]", "02/05/24"], ["w-[180px]", "02/12/24"]];

export default function App() {
  return (
    <div className="w-[1920px] h-[1080px] flex flex-col overflow-hidden bg-[#f0f0f0] [font-family:Liberation_Sans,sans-serif]">
      {/* Title bar */}
      <div className="h-[29px] shrink-0 flex items-center border-b border-[#3c4a58] bg-[linear-gradient(180deg,rgba(90,110,130,0.35),rgba(255,255,255,0.12)_35%,rgba(90,105,120,0.2)),linear-gradient(90deg,#cfd9e1_0%,#d4dde5_21.500%,#b8cfe4_25%,#aed3f8_35%,#aed3f8_76%,#a0c8ee_77.500%,#2c587f_78.500%,#22476c_92%,#30567c_100%)]">
        <svg width="20" height="20" viewBox="0 0 20 20" className="ml-[1px] shrink-0">
          <path d="M0 4h20v12H0z" fill="#2020c0" /><path d="M0 14l6-5 4 3 8-9" fill="none" stroke="#ff2020" strokeWidth="1.500" />
        </svg>
        <span className="ml-[4px] mt-[2px] text-[14.100px] text-[#1c1c1c] [font-family:Noto_Sans,sans-serif] whitespace-nowrap">Advanced GET for TS2000i - [FTSEMIB - SPMIB FUTURES, 60]</span>
        <div className="ml-auto mr-[3px] self-start flex h-[25px] border border-t-0 border-[#38485a] rounded-b-[4px] overflow-hidden">
          <div className="w-[38px] flex items-center justify-center bg-[linear-gradient(180deg,#a8b4c0,#5c6e80_50%,#7f8f9e)] border-r border-[#b8c4d0]"><div className="w-[16px] h-[5px] mt-[7px] bg-white" /></div>
          <div className="w-[36px] flex items-center justify-center bg-[linear-gradient(180deg,#a8b4c0,#5c6e80_50%,#7f8f9e)] border-r border-[#b8c4d0]">
            <svg width="18" height="18" viewBox="0 0 18 18"><path d="M6 1h11v12h-3" fill="none" stroke="#dde" strokeWidth="1.500" /><rect x="2" y="5" width="11" height="11" fill="none" stroke="#eef" strokeWidth="1.800" /></svg>
          </div>
          <div className="w-[63px] flex items-center justify-center bg-[linear-gradient(180deg,#d89a8a,#c84838_50%,#c03020_70%,#d88070)]">
            <svg width="20" height="20" viewBox="0 0 20 20"><path d="M3 3l14 14M17 3L3 17" stroke="#fff" strokeWidth="4" /></svg>
          </div>
        </div>
      </div>

      {/* Menu bar */}
      <div className="h-[28px] shrink-0 flex items-center bg-[linear-gradient(180deg,#fcfdfd,#eef1f7_28%,#d9e0ef)] border-b border-[#b0b8c4] relative">
        <svg width="18" height="20" viewBox="0 0 18 18" className="ml-[8px] shrink-0"><path d="M7.500 1.500h3v5h3v3h-3v7h-5v-5h-2v-3h4z" fill="#fff" stroke="#000" strokeWidth="1.200" /></svg>
        <div className="ml-[8px] mt-[2px] flex gap-[13.500px] text-[14.300px] text-[#1c1c1c] [font-family:Noto_Sans,sans-serif]">
          {[["F", "ile"], ["P", "age"], ["C", "hart"], ["T", "ools"], ["V", "iew"], ["W", "indow"], ["H", "elp"]].map(([a, b]) => <span key={a}><span className="underline">{a}</span>{b}</span>)}
        </div>
        <div className="ml-auto mr-[1px] flex gap-[1px]">
          {["min", "res", "x"].map((k) => (
            <div key={k} className="w-[22.500px] h-[25px] flex items-center justify-center border border-[#c4ccd8] bg-[#dde3f0]">
              <svg width="12" height="12" viewBox="0 0 12 12">
                {k === "min" && <rect x="2" y="8" width="6" height="2" fill="#555" />}
                {k === "res" && <g fill="none" stroke="#555" strokeWidth="1.200"><path d="M4 1h6v5H8" /><rect x="1.500" y="4" width="6" height="6" /></g>}
                {k === "x" && <path d="M2 2l7 7M9 2L2 9" stroke="#555" strokeWidth="1.800" />}
              </svg>
            </div>
          ))}
        </div>
      </div>

      {/* Toolbar */}
      <div className="h-[34px] shrink-0 flex items-start pt-[6px] bg-[#f0f0f0] border-b-2 border-[#a0a0a0]">
        <div className="ml-[6px] flex"><Tb><HandIcon /></Tb><Tb><QuoteIcon /></Tb></div>
        <div className="ml-[8px] flex">
          <Tb><DocIcon /></Tb><Tb><SaveIcon /></Tb><Tb><ArrowDoc /></Tb><Tb><ArrowDoc right /></Tb><Tb><SplitDoc /></Tb><Tb><GrayX /></Tb><Tb><BlueX /></Tb>
        </div>
        <div className="ml-[8px] flex"><Tb><PrintIcon /></Tb><Tb><HelpIcon /></Tb><Tb><PointerHelp /></Tb></div>
        <div className="ml-[6px] w-px h-[30px] -mt-[6px] bg-[#c0c0c0]" />
        <div className="ml-[7px] flex">
          {IND_1.map((t, i) => <Tb key={t} wide p={i === 5 || i === 7}><Sv>{t}</Sv></Tb>)}
          <Tb wide><Sv c="text-[12px]"><span className="text-[#0000ff]">X</span>T<span className="text-[#ff0000]">L</span></Sv></Tb>
        </div>
        <div className="ml-[7px] w-px h-[30px] -mt-[6px] bg-[#c0c0c0]" />
        <div className="ml-[6px] flex">
          {IND_2.map((t) => <Tb key={t} wide><Sv>{t}</Sv></Tb>)}
        </div>
        <div className="ml-[7px] w-px h-[30px] -mt-[6px] bg-[#c0c0c0]" />
        <div className="ml-[7px] flex">
          {PERIODS.map((t) => <Tb key={t} p={t === "60"}><span className="text-[14px] font-bold text-[#222]">{t}</span></Tb>)}
        </div>
        <div className="ml-[6px] w-px h-[30px] -mt-[6px] bg-[#c0c0c0]" />
      </div>

      {/* Main */}
      <div className="h-[965px] shrink-0 flex">
        {/* Left strip */}
        <div className="w-[38px] shrink-0 border-r-2 border-[#808080] border-b border-b-[#b0b0b0]">
          <div className="h-[417px] pt-[11px] pl-[3px] border-b border-[#b0b0b0]">
            <div className="flex flex-col gap-[1px]">
              {LEFT_TOOLS.map((t, i) => <div key={i} className={"w-[31px] h-[20.900px] flex items-center justify-center " + (t.p ? PRESSED : RAISED)}>{t.i}</div>)}
            </div>
            <div className={"mt-[7px] w-[31px] h-[21px] flex items-center justify-center " + RAISED}><NotesIco /></div>
          </div>
        </div>

        {/* Centre */}
        <div className="w-[1851px] shrink-0 flex flex-col">
          <div className="h-[19px] shrink-0 flex items-center bg-[#0000ff] text-white font-bold text-[16.500px] leading-none pl-[7px] whitespace-nowrap">
            <span className="w-[661px]">02/15/24</span>
            <span className="w-[141px]">O: 31600.000</span>
            <span className="w-[94px]">31740.000</span>
            <span className="w-[116.500px]"><span className="text-[#ff0000]">L:</span> 31595.000</span>
            <span className="w-[360px]">C: 31720.000</span>
            <span className="ml-auto pr-[6px] text-[#ff0000]">-1.000</span>
          </div>
          <div className="h-[6px] shrink-0 bg-[#fbfbfb] border-b border-[#909090]" />

          <div className="h-[598px] shrink-0 flex">
            <div className="relative w-[1754px] border-l border-[#808080] bg-black overflow-hidden">
              <MainChart />
              <div className="absolute left-[1px] top-[0px] font-bold text-[16.500px] leading-[19px]">
                {INFO.map(([a, b, c], i) => (
                  <div key={i} className={"flex h-[19px] " + c}><span className="w-[31px]">{a}</span><span>{b}</span></div>
                ))}
              </div>
              <div className="absolute left-[313px] bottom-[0px] flex h-[19px] items-center font-bold text-[16.500px] text-[#808080]">
                {BOTTOM_PRICES.map((p, i) => <span key={i} className={"w-[96px] " + (i === 14 ? "text-white" : "")}>{p}</span>)}
              </div>
            </div>
            <div className="w-[97px] bg-black"><PriceAxis /></div>
          </div>

          <div className="h-[6px] shrink-0 bg-[#fbfbfb] border-b-2 border-[#707070]" />

          <div className="h-[307px] shrink-0 flex">
            <div className="w-[1754px] flex flex-col">
              <div className="relative h-[288px] border-l border-[#808080] bg-black overflow-hidden">
                <OscChart />
                <div className="absolute left-[1px] top-0 font-bold text-[16.500px] leading-[19px]">
                  <div className="h-[19px] text-white">Osc 16,64</div>
                  {OSCINFO.map(([a, b, c]) => <div key={a} className={"flex h-[19px] " + c}><span className="w-[39px]">{a}</span><span>{b}</span></div>)}
                </div>
              </div>
              <div className="h-[19px] flex items-start border-l border-[#808080] border-r-2 border-r-[#606060] mr-[2px]">
                <div className={"w-[21px] h-[19px] flex items-center justify-center " + RAISED}><span className="block w-0 h-0 border-y-[5px] border-y-transparent border-r-[5px] border-r-black" /></div>
                <div className={"w-[21px] h-[19px] flex items-center justify-center " + RAISED}><span className="block w-0 h-0 border-y-[5px] border-y-transparent border-l-[5px] border-l-black" /></div>
                <Tab w={57} c="ml-[2px] w-[57px]">Osc 5,35</Tab>
                <Tab w={65} c="-ml-[4px] w-[65px]" active>Osc 16,64</Tab>
                <Tab w={68} c="-ml-[1px] w-[68px]">ADX/DMI 96</Tab>
                <Tab w={41} c="-ml-[2px] w-[41px]">CCI 96</Tab>
                <Tab w={98} c="-ml-[2px] w-[98px]">MACD 24, 48, 48</Tab>
              </div>
            </div>
            <div className="w-[97px] bg-black"><OscAxis /></div>
          </div>

          <div className="h-[7px] shrink-0 bg-[#fbfbfb] border-b-2 border-[#909090]" />

          <div className="h-[22px] shrink-0 flex items-start">
            <div className="relative w-[1752px] h-[20px] flex bg-black border-l-2 border-[#808080] text-white font-bold text-[16.500px] leading-[20px] whitespace-nowrap">
              <div className="w-[18px]" />
              {DATES.map(([w, d]) => <div key={d} className={w + " border-l border-white pl-[2px]"}>{d}</div>)}
              <div className="absolute left-[182px] top-[2px] h-[17px] w-[128px] bg-[#0000ff] leading-[17px] text-center">01/10/24 - 13:00</div>
            </div>
            <div className="w-[99px] h-[22px] bg-[#0000ff]" />
          </div>
        </div>

        {/* Right strip */}
        <div className="w-[31px] shrink-0 pt-[9px] pl-[5px]">
          <div className="flex flex-col gap-[1px]">
            {RIGHT_1.map((t, i) => <div key={i} className={"w-[23px] h-[21px] flex items-center justify-center " + (t.p ? PRESSED : RAISED)}>{t.i}</div>)}
          </div>
          <div className="mt-[5px] flex flex-col gap-[1px]">
            {RIGHT_2.map((t, i) => <div key={i} className={"w-[23px] h-[21px] flex items-center justify-center " + RAISED}>{t.i}</div>)}
          </div>
          <div className={"mt-[6px] w-[23px] h-[21px] flex items-center justify-center " + PRESSED}>
            <svg width="16" height="18" viewBox="0 0 16 18"><path d="M1 1h5v9c0 3 4 3 4 0V1h5v10c0 8-14 8-14 0z" fill="#e00000" /><path d="M1 1h5v2H1zM10 1h5v2h-5z" fill="#202020" /></svg>
          </div>
          <div className="mt-[7px] -ml-[5px] h-px bg-[#b0b0b0]" />
        </div>
      </div>

      {/* Status bar */}
      <div className="h-[24px] shrink-0 flex flex-col bg-[#f0f0f0]">
        <div className="h-[22px] flex items-end">
          <div className="ml-[1434px] w-[484px] h-[18px] border-t border-l border-r border-[#a0a0a0] pl-[2px] text-[13.500px] leading-[18px] text-[#1c1c1c]">Page: 1 - FTSEMIB B</div>
        </div>
        <div className="h-[2px] bg-[#54708a]" />
      </div>
    </div>
  );
}
